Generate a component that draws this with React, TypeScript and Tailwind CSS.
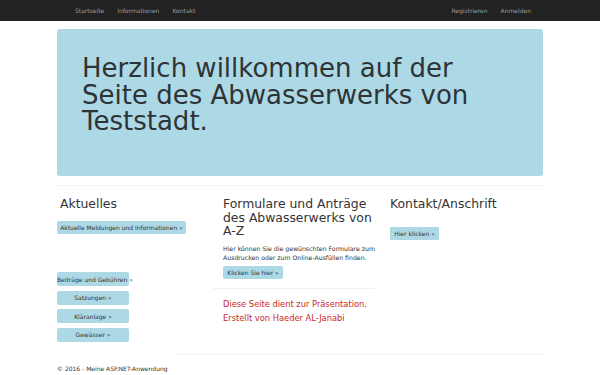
export default function App() {
  const font = { fontFamily: '"DejaVu Sans", Verdana, sans-serif' }
  return (
    <div className="min-h-[375px] bg-white text-[#333]" style={font}>
      <nav className="h-[21px] bg-[#222] flex items-center text-[6px] text-[#9d9d9d]">
        <div className="w-[486px] mx-auto flex items-center justify-between">
          <div className="flex gap-[13px] pl-[18px]">
            <span>Startseite</span>
            <span>Informationen</span>
            <span>Kontakt</span>
          </div>
          <div className="flex gap-[13px] pr-[12px]">
            <span>Registrieren</span>
            <span>Anmelden</span>
          </div>
        </div>
      </nav>

      <main className="w-[486px] mx-auto">
        <section className="mt-[8px] h-[147px] bg-[#add8e6] rounded-[3px] pl-[25px] pt-[26px]">
          <h1 className="text-[26px] leading-[26.5px] text-[#2e3436]">
            Herzlich willkommen auf der
            <br />
            Seite des Abwasserwerks von
            <br />
            Teststadt.
          </h1>
        </section>

        <div className="mt-[9px] border-t border-[#f4f4f4]" />

        <div className="grid grid-cols-[166px_167px_1fr]">
          <div className="pt-[11px]">
            <h2 className="ml-[3px] text-[12.4px] leading-[14px]">Aktuelles</h2>
            <button className="block mt-[10px] h-[13px] w-[129px] rounded-[2px] bg-[#add8e6] text-[6px] text-[#333]">
              Aktuelle Meldungen und Informationen »
            </button>
            <div className="mt-[38px] flex flex-col gap-[4.5px]">
              {["Beiträge und Gebühren »", "Satzungen »", "Kläranlage »", "Gewässer »"].map((t) => (
                <button
                  key={t}
                  className="block h-[14px] w-[72px] rounded-[2px] bg-[#add8e6] text-[6px] text-[#333] whitespace-nowrap"
                >
                  {t}
                </button>
              ))}
            </div>
          </div>

          <div className="pt-[11px]">
            <h2 className="w-[155px] text-[12.4px] leading-[13.5px]">
              Formulare und Anträge des Abwasserwerks von A-Z
            </h2>
            <p className="mt-[6px] text-[6.2px] leading-[9px] whitespace-nowrap">
              Hier können Sie die gewünschten Formulare zum
              <br />
              Ausdrucken oder zum Online-Ausfüllen finden.
            </p>
            <button className="block mt-[4px] h-[13px] w-[60px] rounded-[2px] bg-[#add8e6] text-[6px] text-[#333]">
              Klicken Sie hier »
            </button>
            <div className="mt-[9px] -ml-[10px] w-[162px] border-t border-[#f2f2f2]" />
            <p className="mt-[9px] text-[8.3px] leading-[12px] text-[#c62828]">
              Diese Seite dient zur Präsentation.
            </p>
            <p className="mt-[2px] text-[8.3px] leading-[12px] text-[#c62828]">
              Erstellt von Haeder AL-Janabi
            </p>
          </div>

          <div className="pt-[11px]">
            <h2 className="text-[12.4px] leading-[14px]">Kontakt/Anschrift</h2>
            <button className="block mt-[16px] h-[13px] w-[49px] rounded-[1px] bg-[#add8e6] text-[6px] text-[#333]">
              Hier klicken »
            </button>
          </div>
        </div>

        <div className="mt-[12px] ml-[118px] w-[370px] border-t border-[#f4f4f4]" />
        <footer className="pt-[9px] text-[6px] text-[#333]">© 2016 - Meine ASP.NET-Anwendung</footer>
      </main>
    </div>
  )
}
